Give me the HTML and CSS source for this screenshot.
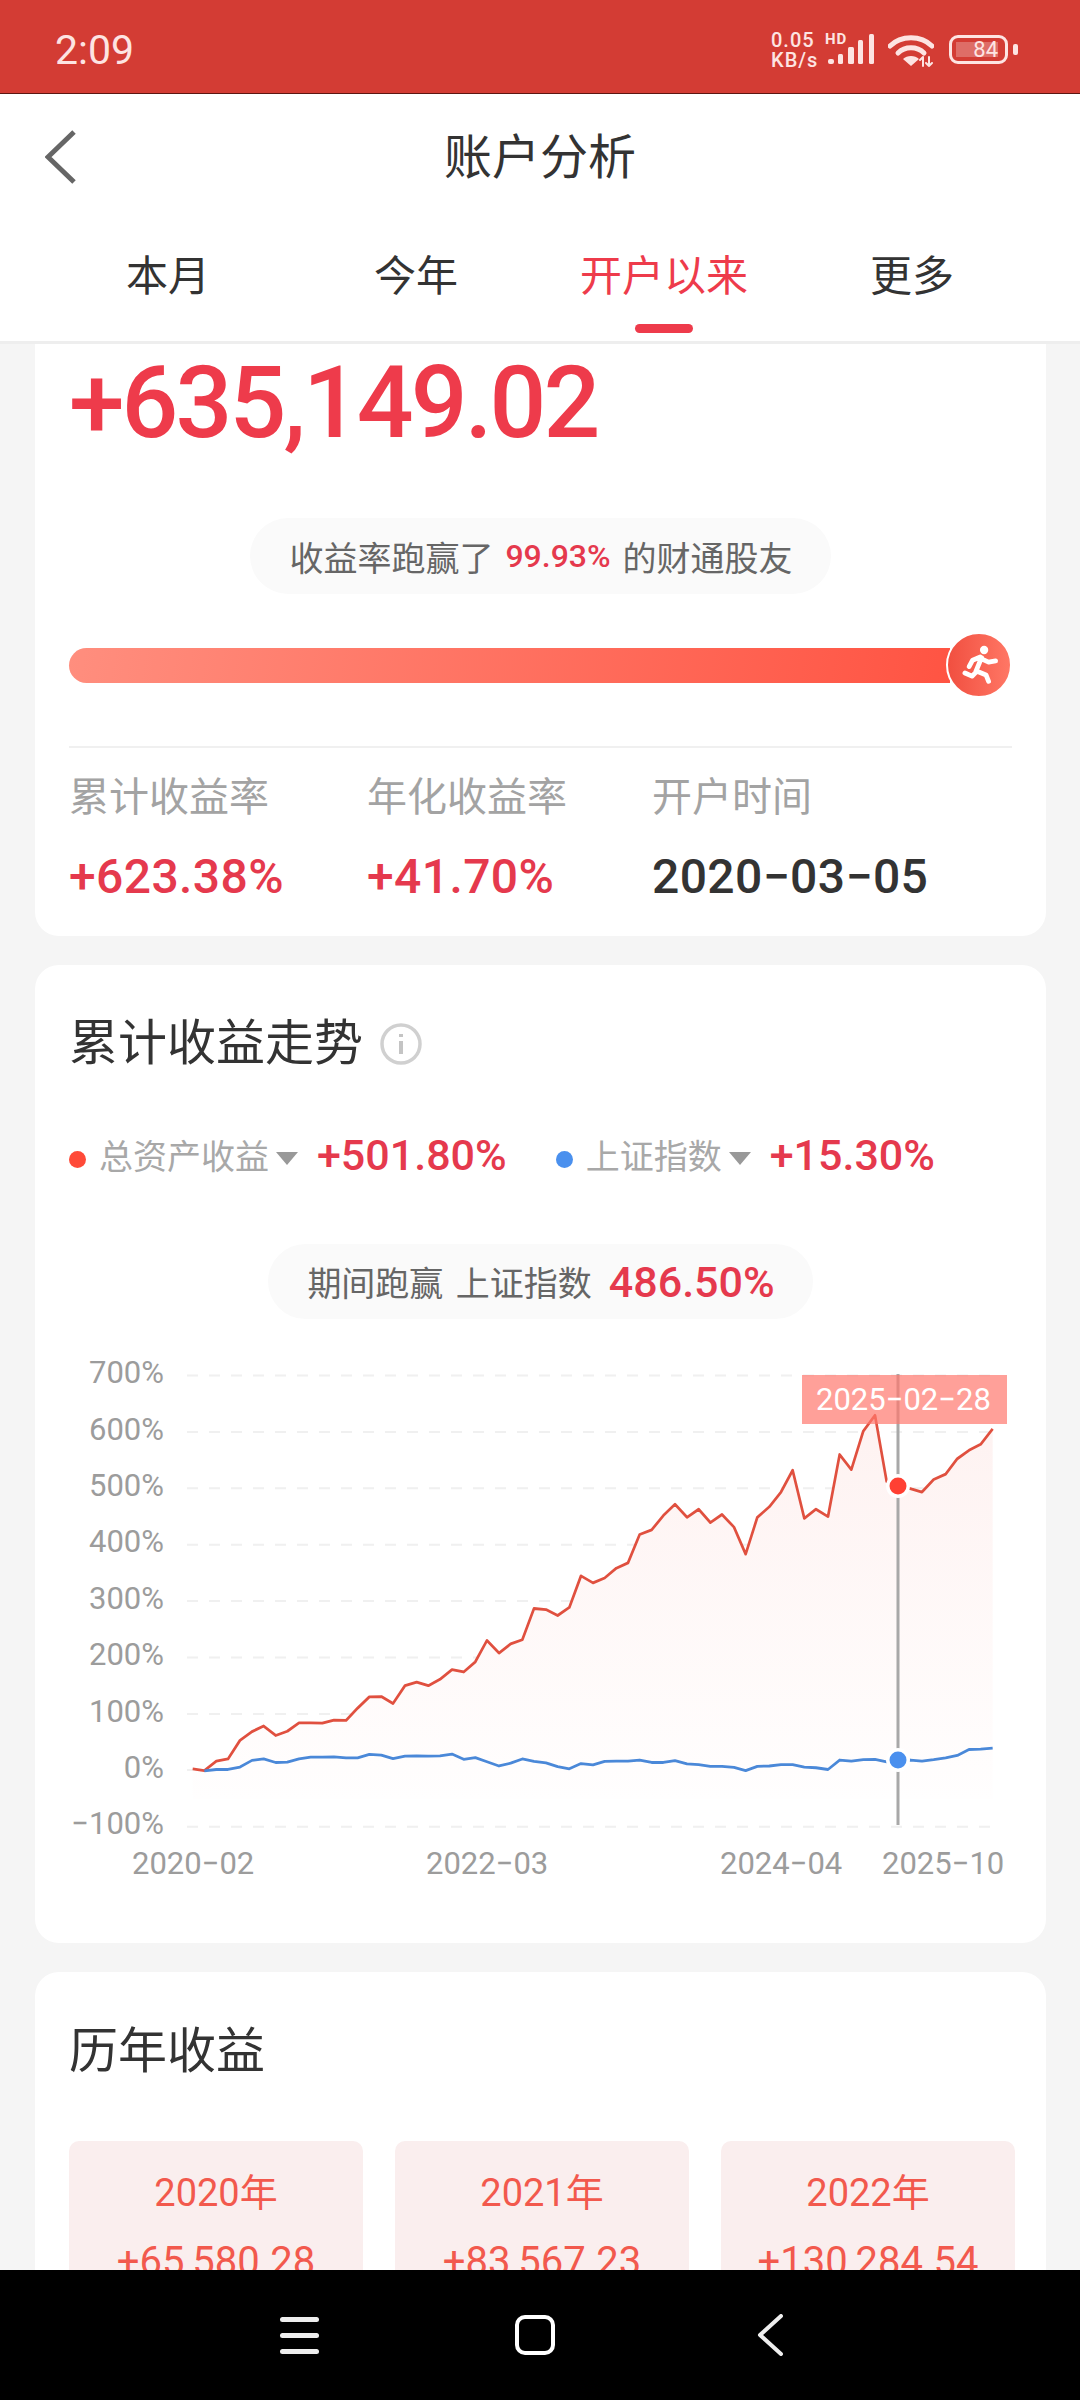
FILE: index.html
```html
<!DOCTYPE html>
<html lang="zh">

<head>
  <meta charset="UTF-8">
  <meta name="viewport" content="width=device-width, initial-scale=1.0">
  <title>账户分析</title>
  <link rel="stylesheet" href="styles.css">
</head>

<body>
  <div class="status-bar">
    <span class="status-time">2:09</span>
    <div class="status-icons">
      <div class="net-speed"><span>0.05</span><span>KB/s</span></div>
      <div class="signal">
        <span class="signal-hd">HD</span>
        <svg class="signal-bars" width="47" height="30" viewBox="0 0 47 30">
          <rect x="0" y="25" width="6" height="5" rx="2" />
          <rect x="10" y="20" width="5" height="10" rx="1.5" />
          <rect x="20" y="13" width="6" height="17" rx="1.5" />
          <rect x="30" y="6" width="5" height="24" rx="1.5" />
          <rect x="41" y="0" width="5" height="30" rx="1.5" />
        </svg>
      </div>
      <svg class="wifi" width="46" height="34" viewBox="0 0 46 34">
        <path d="M2 13 C13 2 33 2 44 13" />
        <path d="M10 20 C17 13 29 13 36 20" />
        <path class="wifi-dot" d="M15 26 C19 22 27 22 31 26 L23 33 Z" />
        <path class="wifi-arrows" d="M35 33 V24 M32 27 L35 24 M41 24 V33 M38 30 L41 33 L44 30" />
      </svg>
      <div class="battery">
        <div class="battery-body">
          <div class="battery-fill">84</div>
        </div>
        <div class="battery-tip"></div>
      </div>
    </div>
  </div>

  <div class="header">
    <div class="title-row">
      <svg class="back" width="32" height="54" viewBox="0 0 32 54">
        <path d="M29 2 L3 27 L29 52" />
      </svg>
      <h1>账户分析</h1>
    </div>
    <div class="tabs">
      <div class="tab">本月</div>
      <div class="tab">今年</div>
      <div class="tab active">开户以来</div>
      <div class="tab">更多</div>
    </div>
  </div>

  <div class="content">
    <section class="card card-summary">
      <div class="total">+635,149.02</div>
      <div class="pill rank"><span>收益率跑赢了</span><b>99.93%</b><span>的财通股友</span></div>
      <div class="progress">
        <div class="progress-bar"></div>
        <div class="progress-knob">
          <svg width="66" height="66" viewBox="135 68 194 194">
            <circle cx="248" cy="118" r="13" class="runner-head" />
            <path d="M240 142 L222 186 M236 140 L212 150 L201 170 M240 146 L262 156 L284 152 M224 184 L254 196 L262 216 M222 188 L210 200 L188 190" />
          </svg>
        </div>
      </div>
      <div class="stats">
        <div class="stat stat-a">
          <div class="stat-label">累计收益率</div>
          <div class="stat-value up">+623.38%</div>
        </div>
        <div class="stat stat-b">
          <div class="stat-label">年化收益率</div>
          <div class="stat-value up">+41.70%</div>
        </div>
        <div class="stat">
          <div class="stat-label">开户时间</div>
          <div class="stat-value">2020−03−05</div>
        </div>
      </div>
    </section>

    <section class="card card-trend">
      <div class="card-title">
        <h2>累计收益走势</h2>
        <svg class="info" width="42" height="42" viewBox="0 0 42 42">
          <circle cx="21" cy="21" r="19" />
          <path d="M21 18 V31 M21 11 V14" />
        </svg>
      </div>
      <div class="legend">
        <span class="dot dot-red"></span>
        <span class="legend-name">总资产收益</span>
        <span class="caret"></span>
        <span class="legend-value">+501.80%</span>
        <span class="dot dot-blue"></span>
        <span class="legend-name">上证指数</span>
        <span class="caret"></span>
        <span class="legend-value">+15.30%</span>
      </div>
      <div class="pill beat"><span>期间跑赢 上证指数</span><b>486.50%</b></div>

      <svg class="chart" width="943" height="535" viewBox="69 1350 943 535">
        <defs>
          <linearGradient id="area" x1="0" y1="0" x2="0" y2="1">
            <stop offset="0" stop-color="#fef2f1" />
            <stop offset="1" stop-color="#fffefe" />
          </linearGradient>
        </defs>
        <g class="grid">
          <line x1="187" x2="990" y1="1375.5" y2="1375.5" />
          <line x1="187" x2="990" y1="1432" y2="1432" />
          <line x1="187" x2="990" y1="1488.3" y2="1488.3" />
          <line x1="187" x2="990" y1="1544.7" y2="1544.7" />
          <line x1="187" x2="990" y1="1601" y2="1601" />
          <line x1="187" x2="990" y1="1657.5" y2="1657.5" />
          <line x1="187" x2="990" y1="1714" y2="1714" />
          <line x1="187" x2="990" y1="1770" y2="1770" />
          <line x1="187" x2="990" y1="1826.7" y2="1826.7" />
        </g>
        <g class="axis-y">
          <text x="164" y="1383">700%</text>
          <text x="164" y="1439.5">600%</text>
          <text x="164" y="1496">500%</text>
          <text x="164" y="1552">400%</text>
          <text x="164" y="1608.5">300%</text>
          <text x="164" y="1665">200%</text>
          <text x="164" y="1721.5">100%</text>
          <text x="164" y="1777.5">0%</text>
          <text x="164" y="1834">−100%</text>
        </g>
        <g class="axis-x">
          <text x="132" y="1874">2020−02</text>
          <text x="426" y="1874">2022−03</text>
          <text x="720" y="1874">2024−04</text>
          <text x="882" y="1874">2025−10</text>
        </g>
        <g transform="translate(60 1350) scale(0.33333 0.35075)">
          <polygon class="area" points="398,1280 398,1194 433,1199 469,1172 504,1166 540,1113 576,1088 611,1072 647,1099 682,1087 717,1063 752,1063 787,1064 822,1055 858,1056 893,1021 928,989 964,988 999,1008 1035,957 1070,947 1105,957 1140,939 1176,911 1211,918 1246,889 1281,828 1317,864 1352,838 1387,826 1422,737 1458,740 1493,757 1528,734 1563,644 1599,664 1634,650 1669,622 1704,607 1739,526 1775,513 1810,472 1845,440 1881,477 1916,454 1951,492 1986,469 2022,505 2057,582 2092,477 2128,447 2163,405 2198,343 2233,480 2268,454 2304,475 2339,298 2374,341 2410,231 2445,186 2480,375 2515,388 2551,395 2586,405 2621,369 2657,354 2692,310 2727,286 2762,269 2798,225 2798,1280" />
          <polyline class="line-red" points="398,1194 433,1199 469,1172 504,1166 540,1113 576,1088 611,1072 647,1099 682,1087 717,1063 752,1063 787,1064 822,1055 858,1056 893,1021 928,989 964,988 999,1008 1035,957 1070,947 1105,957 1140,939 1176,911 1211,918 1246,889 1281,828 1317,864 1352,838 1387,826 1422,737 1458,740 1493,757 1528,734 1563,644 1599,664 1634,650 1669,622 1704,607 1739,526 1775,513 1810,472 1845,440 1881,477 1916,454 1951,492 1986,469 2022,505 2057,582 2092,477 2128,447 2163,405 2198,343 2233,480 2268,454 2304,475 2339,298 2374,341 2410,231 2445,186 2480,375 2515,388 2551,395 2586,405 2621,369 2657,354 2692,310 2727,286 2762,269 2798,225" />
          <polyline class="line-blue" points="433,1200 469,1196 504,1196 540,1189 576,1170 611,1166 647,1176 682,1175 717,1166 752,1161 787,1161 822,1160 858,1163 893,1163 928,1153 964,1155 999,1165 1035,1158 1070,1157 1105,1158 1140,1157 1176,1152 1211,1167 1246,1162 1281,1174 1317,1186 1352,1178 1387,1166 1422,1173 1458,1177 1493,1188 1528,1194 1563,1179 1599,1183 1634,1173 1669,1172 1704,1172 1739,1169 1775,1176 1810,1176 1845,1171 1881,1180 1916,1182 1951,1187 1986,1187 2022,1190 2057,1199 2092,1187 2128,1186 2163,1182 2198,1182 2233,1189 2268,1191 2304,1196 2339,1169 2374,1172 2410,1168 2445,1167 2480,1174 2515,1170 2551,1169 2586,1172 2621,1168 2657,1163 2692,1156 2727,1139 2762,1138 2798,1135" />
        </g>
        <line class="cursor" x1="898" x2="898" y1="1374" y2="1825" />
        <rect class="tip-box" x="802" y="1375" width="205" height="49" />
        <text class="tip-text" x="816" y="1410">2025−02−28</text>
        <circle class="halo" cx="898" cy="1486" r="12" />
        <circle class="marker-red" cx="898" cy="1486" r="8.5" />
        <circle class="halo" cx="898" cy="1760" r="12" />
        <circle class="marker-blue" cx="898" cy="1760" r="8.5" />
      </svg>
    </section>

    <section class="card card-years">
      <div class="card-title">
        <h2>历年收益</h2>
      </div>
      <div class="years">
        <div class="year">
          <div class="year-name">2020年</div>
          <div class="year-value">+65,580.28</div>
        </div>
        <div class="year">
          <div class="year-name">2021年</div>
          <div class="year-value">+83,567.23</div>
        </div>
        <div class="year">
          <div class="year-name">2022年</div>
          <div class="year-value">+130,284.54</div>
        </div>
      </div>
    </section>
  </div>

  <div class="nav-bar">
    <div class="nav-menu"><span></span><span></span><span></span></div>
    <div class="nav-home"></div>
    <svg class="nav-back" width="26" height="42" viewBox="0 0 26 42">
      <path d="M24 2 L3 21 L24 40" />
    </svg>
  </div>
</body>

</html>
```

FILE: styles.css
```css
* {
  box-sizing: border-box;
}

body {
  margin: 0;
  width: 1080px;
  height: 2400px;
  display: flex;
  flex-direction: column;
  overflow: hidden;
  background-color: #f5f5f5;
  font-family: Roboto, "Noto Sans CJK SC", sans-serif;
  color: #333;
}

h1,
h2 {
  margin: 0;
  font-weight: 400;
}

/* status bar */
.status-bar {
  flex: none;
  height: 94px;
  padding: 6px 62px 0 55px;
  display: flex;
  align-items: center;
  justify-content: space-between;
  background-color: #d33c34;
  border-bottom: 1px solid #5c1712;
  color: #fde4e2;
}

.status-time {
  font-size: 41px;
  line-height: 46px;
}

.status-icons {
  display: flex;
  align-items: center;
}

.net-speed {
  width: 48px;
  display: flex;
  flex-direction: column;
  font-size: 20px;
  font-weight: 500;
  line-height: 20px;
  letter-spacing: 1px;
  white-space: nowrap;
}

.signal {
  width: 47px;
  height: 32px;
  margin-left: 9px;
  display: flex;
  flex-direction: column;
  position: relative;
}

.signal-hd {
  position: absolute;
  left: -3px;
  top: -1px;
  font-size: 15px;
  font-weight: 700;
  line-height: 13px;
  letter-spacing: 1px;
}

.signal-bars {
  fill: #fde4e2;
}

.wifi {
  margin-left: 13px;
  fill: none;
  stroke: #fde4e2;
  stroke-width: 5;
  stroke-linecap: round;
}

.wifi-dot {
  fill: #fde4e2;
  stroke: none;
}

.wifi-arrows {
  stroke-width: 2;
}

.battery {
  margin-left: 15px;
  display: flex;
  align-items: center;
}

.battery-body {
  width: 59px;
  height: 29px;
  padding: 4px;
  border: 3px solid #fde4e2;
  border-radius: 9px;
}

.battery-fill {
  width: 42px;
  height: 15px;
  display: flex;
  align-items: center;
  justify-content: flex-end;
  background-color: rgba(255, 255, 255, 0.25);
  font-size: 22px;
  line-height: 15px;
}

.battery-tip {
  width: 5px;
  height: 11px;
  margin-left: 5px;
  border-radius: 2px;
  background-color: #fde4e2;
}

/* header */
.header {
  flex: none;
  background-color: #fff;
  border-bottom: 3px solid #eee;
}

.title-row {
  height: 126px;
  padding-left: 45px;
  display: grid;
  grid-template-columns: 399px auto 1fr;
  align-items: center;
}

.title-row h1 {
  grid-column: 2;
  padding-top: 2px;
  font-size: 48px;
  line-height: 60px;
}

.back {
  grid-column: 1;
  fill: none;
  stroke: #666;
  stroke-width: 5;
}

.tabs {
  height: 121px;
  padding: 29px 44px 0;
  display: grid;
  grid-template-columns: repeat(4, 1fr);
}

.tab {
  font-size: 42px;
  line-height: 56px;
  text-align: center;
}

.tab.active {
  color: #ee3b4b;
}

.tab.active::after {
  content: "";
  display: block;
  width: 58px;
  height: 9px;
  margin: 19px auto 0;
  border-radius: 5px;
  background-color: #ee3b4b;
}

/* cards */
.content {
  flex: 1;
  min-height: 0;
  overflow: hidden;
  padding: 0 34px 0 35px;
}

.card {
  padding: 0 34px;
  background-color: #fff;
  border-radius: 24px;
}

.card-summary {
  height: 592px;
  padding-top: 9px;
  border-radius: 0 0 24px 24px;
}

.card-trend {
  height: 978px;
  margin-top: 29px;
  padding-top: 48px;
}

.card-years {
  margin-top: 29px;
  padding-top: 49px;
  padding-bottom: 60px;
}

.card-title {
  display: flex;
  align-items: center;
  gap: 17px;
}

.card-title h2 {
  font-size: 49px;
  line-height: 62px;
}

.info {
  fill: none;
  stroke: #d0d0d0;
  stroke-width: 3.5;
}

.info path {
  stroke: #c4c4c4;
  stroke-width: 4;
}

.up {
  color: #e5394d;
}

.total {
  font-size: 100px;
  font-weight: 500;
  line-height: 100px;
  letter-spacing: -2.9px;
  color: #ee3b4b;
}

.pill {
  width: fit-content;
  height: 76px;
  margin: 0 auto;
  display: flex;
  align-items: center;
  border-radius: 38px;
  background-color: #fafafa;
  font-size: 34px;
  color: #666;
  white-space: nowrap;
}

.pill b {
  font-weight: 500;
  color: #e5394d;
}

.rank {
  margin-top: 65px;
  padding: 0 38px 0 39px;
  gap: 12px;
}

.rank b {
  font-size: 32px;
}

.progress {
  height: 66px;
  margin-top: 38px;
  display: flex;
  align-items: center;
}

.progress-bar {
  width: 884px;
  height: 35px;
  border-radius: 18px 0 0 18px;
  background: linear-gradient(100deg, #ff8e7e 0%, #ff5443 100%);
}

.progress-knob {
  width: 66px;
  height: 66px;
  margin-left: -4px;
  flex: none;
  border: 2px solid #fff;
  border-radius: 50%;
  background: linear-gradient(90deg, #f14f40 0%, #ff7765 100%);
  display: flex;
  align-items: center;
  justify-content: center;
}

.progress-knob svg {
  fill: none;
  stroke: #fff;
  stroke-width: 15;
  stroke-linecap: round;
  stroke-linejoin: round;
}

.runner-head {
  fill: #fff;
  stroke: none;
}

.stats {
  margin-top: 48px;
  padding-top: 25px;
  display: flex;
  border-top: 2px solid #f0f0f0;
}

.stat-a {
  width: 298px;
}

.stat-b {
  width: 285px;
}

.stat-label {
  font-size: 40px;
  line-height: 50px;
  color: #a3a3a3;
}

.stat-value {
  margin-top: 26px;
  font-size: 48px;
  font-weight: 500;
  line-height: 56px;
  letter-spacing: 0.4px;
}

.stat-value.up {
  color: #e5394d;
}

.legend {
  height: 60px;
  margin-top: 52px;
  display: flex;
  align-items: center;
  white-space: nowrap;
}

.dot {
  width: 17px;
  height: 17px;
  margin-top: 4px;
  margin-right: 13px;
  flex: none;
  border-radius: 50%;
}

.dot-red {
  background-color: #ff4a38;
}

.dot-blue {
  margin-left: 49px;
  background-color: #4a90ee;
}

.legend-name {
  font-size: 34px;
  line-height: 60px;
  color: #a8a8a8;
}

.caret {
  width: 0;
  height: 0;
  margin: 3px 19px 0 7px;
  border-left: 11px solid transparent;
  border-right: 11px solid transparent;
  border-top: 13px solid #999;
}

.legend-value {
  font-size: 43px;
  font-weight: 500;
  line-height: 56px;
  margin-bottom: 4px;
  color: #e5394d;
}

.beat {
  height: 75px;
  margin-top: 57px;
  padding: 0 38px 0 39px;
  gap: 17px;
  word-spacing: 4px;
}

.beat b {
  font-size: 43px;
}

.chart {
  display: block;
  margin-top: 31px;
}

.grid line {
  stroke: #f0f0f0;
  stroke-width: 2;
  stroke-dasharray: 11 11;
}

.axis-y text,
.axis-x text {
  font-size: 31px;
  fill: #9c9c9c;
}

.axis-y text {
  text-anchor: end;
}

.area {
  fill: url(#area);
}

.line-red,
.line-blue {
  fill: none;
  stroke-width: 8;
  stroke-linejoin: round;
}

.line-red {
  stroke: #e0503f;
}

.line-blue {
  stroke: #4a88d8;
}

.cursor {
  stroke: #a8a8a8;
  stroke-width: 3;
}

.tip-box {
  fill: rgba(255, 120, 110, 0.7);
}

.tip-text {
  font-size: 31px;
  fill: #fff;
}

.halo {
  fill: #fff;
}

.marker-red {
  fill: #ff4033;
}

.marker-blue {
  fill: #4a90ee;
}

.years {
  margin-top: 58px;
  display: grid;
  grid-template-columns: repeat(3, 294px);
  gap: 32px;
}

.year {
  height: 180px;
  padding-top: 27px;
  border-radius: 10px;
  background-color: #faeeee;
  color: #f2594d;
  text-align: center;
}

.year-name {
  font-size: 38px;
  line-height: 50px;
}

.year-value {
  margin-top: 19px;
  font-size: 40px;
  line-height: 50px;
}

/* navigation bar */
.nav-bar {
  flex: none;
  height: 130px;
  padding-left: 280px;
  display: flex;
  align-items: center;
  background-color: #000;
}

.nav-menu {
  width: 39px;
  height: 37px;
  display: flex;
  flex-direction: column;
  justify-content: space-between;
}

.nav-menu span {
  height: 5px;
  border-radius: 3px;
  background-color: #eee;
}

.nav-home {
  width: 40px;
  height: 40px;
  margin-left: 196px;
  border: 4px solid #fff;
  border-radius: 10px;
}

.nav-back {
  margin-left: 202px;
  fill: none;
  stroke: #eee;
  stroke-width: 4;
  stroke-linecap: round;
  stroke-linejoin: round;
}
```
